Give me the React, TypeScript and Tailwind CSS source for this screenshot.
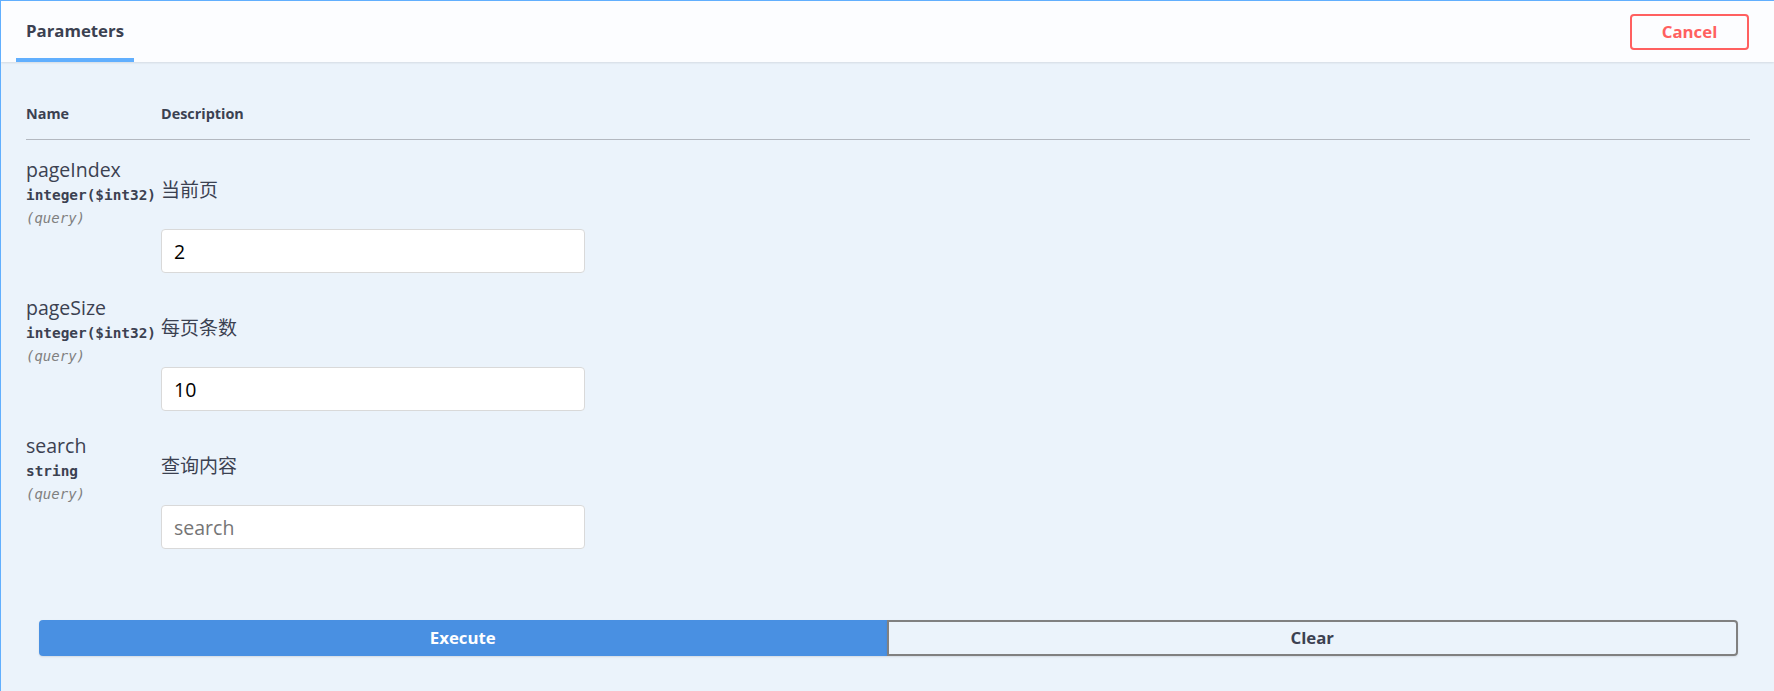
import { useState } from "react";

interface Param {
    name: string;
    type: string;
    desc: string;
    value: string;
}

const initialParams: Param[] = [
    { name: "pageIndex", type: "integer($int32)", desc: "当前页", value: "2" },
    { name: "pageSize", type: "integer($int32)", desc: "每页条数", value: "10" },
    { name: "search", type: "string", desc: "查询内容", value: "" },
];

function ParamRow({ param, onChange }: { param: Param; onChange: (v: string) => void }) {
    return (
        <div className="flex pt-[17px] pb-[5px]">
            {/* Name cell */}
            <div className="w-[135px] shrink-0 flex flex-col">
                <div className="text-[19.5px] leading-[26px] text-[#3b4151]">{param.name}</div>
                <div className="font-['DejaVu_Sans_Mono',monospace] font-bold text-[14.4px] leading-[24px] text-[#3b4151] whitespace-nowrap">
                    {param.type}
                </div>
                <div className="font-['DejaVu_Sans_Mono',monospace] italic text-[14px] leading-[22px] text-[#808080]">(query)</div>
            </div>

            {/* Description cell */}
            <div className="flex flex-col">
                <div className="mt-[20px] text-[19px] leading-[26px] text-[#3b4151] font-['Open_Sans','Noto_Sans_CJK_SC',sans-serif]">
                    {param.desc}
                </div>
                <input
                    type="text"
                    value={param.value}
                    placeholder={param.name}
                    onChange={(e) => onChange(e.target.value)}
                    className="mt-[26px] w-[424px] h-[44px] px-[12px] bg-white border border-[#d9d9d9] rounded-[4px] text-[19.5px] text-black placeholder:text-[#757575] outline-none"
                />
            </div>
        </div>
    );
}

export default function App() {
    const [params, setParams] = useState<Param[]>(initialParams);

    const update = (i: number, v: string) => {
        setParams(params.map((p, idx) => (idx === i ? { ...p, value: v } : p)));
    };

    const clear = () => setParams(params.map((p) => ({ ...p, value: "" })));

    return (
        <div className="w-[1774px] h-[691px] bg-[#ebf3fb] border-l border-t border-[#61affe] font-['Open_Sans','Noto_Sans_CJK_SC',sans-serif] text-[#3b4151] overflow-hidden">
            {/* Section header */}
            <div className="h-[61px] bg-[#fcfdff] shadow-[0_1px_2px_rgba(0,0,0,0.1)] flex items-stretch justify-between pl-[15px] pr-[25px]">
                <div className="flex flex-col justify-end">
                    <div className="px-[10px] text-[16.8px] font-bold leading-[24px] pb-[15px]">Parameters</div>
                    <div className="h-[4px] bg-[#61affe]" />
                </div>
                <div className="flex items-start pt-[12.5px]">
                    <button className="w-[119px] h-[36px] border-2 border-[#ff6060] rounded-[4px] text-[#ff6060] text-[16.8px] font-bold bg-transparent">
                        Cancel
                    </button>
                </div>
            </div>

            {/* Parameters table */}
            <div className="pl-[25px] pr-[24px] pt-[42px]">
                <div className="flex text-[14.4px] font-bold leading-[20px] pb-[15px] border-b border-[#b3b8c0]">
                    <div className="w-[135px]">Name</div>
                    <div>Description</div>
                </div>
                {params.map((p, i) => (
                    <ParamRow key={p.name} param={p} onChange={(v) => update(i, v)} />
                ))}
            </div>

            {/* Execute / Clear */}
            <div className="flex pl-[38px] pr-[36px] mt-[66px]">
                <button className="flex-1 h-[36px] bg-[#4990e2] text-white text-[16.8px] font-bold rounded-l-[4px] shadow-[0_1px_2px_rgba(0,0,0,0.1)]">
                    Execute
                </button>
                <button
                    onClick={clear}
                    className="flex-1 h-[36px] border-2 border-[#808080] text-[#3b4151] text-[16.8px] font-bold rounded-r-[4px] bg-transparent shadow-[0_1px_2px_rgba(0,0,0,0.1)]"
                >
                    Clear
                </button>
            </div>
        </div>
    );
}
